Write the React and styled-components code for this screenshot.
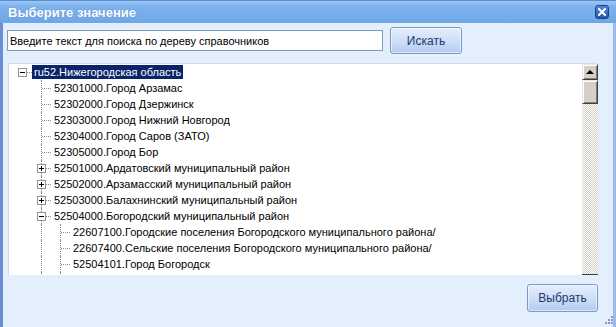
import React from 'react'
import styled, { createGlobalStyle, css } from 'styled-components'

const Global = createGlobalStyle`
html, body {
  margin: 0;
  padding: 0;
  background: #e3effd;
}
* { box-sizing: border-box; }
`;

const Window = styled.div`
width: 616px;
height: 327px;
display: flex;
flex-direction: column;
position: relative;
overflow: hidden;
font-family: "Liberation Sans", Arial, sans-serif;
`;

const TitleBar = styled.div`
height: 23px;
flex: none;
display: flex;
align-items: center;
justify-content: space-between;
padding: 0 7px 0 8px;
border-top: 1px solid #5a8ad6;
background: linear-gradient(to bottom, #9cc6f4 0%, #7db2ec 25%, #6fa6e6 100%);
`;

const Title = styled.div`
color: #fff;
font-weight: bold;
font-size: 13px;
text-shadow: 0 0 1px #4f7fc4;
`;

const CloseButton = styled.div`
width: 14px;
height: 14px;
border-radius: 3px;
border: 1px solid #1d3f8a;
background: linear-gradient(to bottom, #4f86dc, #2556b4);
display: flex;
align-items: center;
justify-content: center;
`;

const Body = styled.div`
flex: 1;
display: flex;
flex-direction: column;
border-left: 3px solid #6b8fd2;
border-right: 3px solid #9cbbea;
padding: 4px 15px 14px 4px;
background: #e3effd;
`;

const SearchRow = styled.div`
height: 27px;
display: flex;
align-items: center;
gap: 7px;
`;

const SearchInput = styled.input`
width: 376px;
height: 21px;
border: 1px solid #7f9db9;
background: #fff;
padding: 0 2px;
font-family: "Liberation Sans", Arial, sans-serif;
font-size: 11px;
color: #000;
outline: none;
`;

const Button = styled.button`
height: ${p => p.$h || 27}px;
width: ${p => p.$w}px;
border: 1px solid #7c98c6;
border-radius: 3px;
background: linear-gradient(to bottom, #e4eefc 0%, #cfdff7 50%, #b3cbef 100%);
box-shadow: inset 0 0 0 1px rgba(255,255,255,0.55);
color: #1d3a6e;
font-family: "Liberation Sans", Arial, sans-serif;
font-size: 12px;
padding: 0;
`;

const Panel = styled.div`
margin-top: 9px;
margin-left: 1px;
height: 212px;
display: flex;
background: #fff;
border-top: 1px solid #d3dde9;
border-left: 1px solid #d3dde9;
overflow: hidden;
`;

const Tree = styled.div`
flex: 1;
padding: 0 0 0 4px;
overflow: hidden;
`;

const Row = styled.div`
height: 16px;
display: flex;
align-items: center;
white-space: nowrap;
`;

const Guide = styled.div`
width: 19px;
height: 16px;
flex: none;
position: relative;
${p => p.$v && css`
  &::before {
    content: '';
    position: absolute;
    left: 9px;
    top: 0;
    height: ${p.$v === 'half' ? '9px' : '16px'};
    border-left: 1px dotted #8a8a8a;
  }
`}
${p => p.$h && css`
  &::after {
    content: '';
    position: absolute;
    left: 10px;
    right: 0;
    top: 8px;
    border-top: 1px dotted #8a8a8a;
  }
`}
`;

const Toggle = styled.div`
position: absolute;
left: 5px;
top: 4px;
width: 9px;
height: 9px;
border: 1px solid #939393;
background: #fff;
z-index: 1;
&::before {
  content: '';
  position: absolute;
  left: 1px;
  top: 3px;
  width: 5px;
  height: 1px;
  background: #000;
}
${p => p.$plus && css`
  &::after {
    content: '';
    position: absolute;
    left: 3px;
    top: 1px;
    width: 1px;
    height: 5px;
    background: #000;
  }
`}
`;

const Label = styled.span`
height: 14px;
line-height: 14px;
padding: 0 2px;
margin-left: ${p => (p.$root ? 0 : 1)}px;
font-size: 11px;
color: ${p => p.$color || '#000'};
${p => p.$selected && css`
  background: #0a246a;
  color: #fff;
`}
`;

const ScrollBar = styled.div`
width: 16px;
flex: none;
display: flex;
flex-direction: column;
margin-top: 0;
`;

const bevel = css`
background: #d4d0c8;
border-top: 1px solid #e8e6e1;
border-left: 1px solid #e8e6e1;
border-right: 1px solid #404040;
border-bottom: 1px solid #404040;
box-shadow: inset 1px 1px 0 #fff, inset -1px -1px 0 #808080;
`;

const ScrollArrow = styled.div`
${bevel}
height: 16px;
display: flex;
align-items: center;
justify-content: center;
&::after {
  content: '';
  border-left: 4px solid transparent;
  border-right: 4px solid transparent;
  border-bottom: 4px solid #000;
}
`;

const Thumb = styled.div`
${bevel}
height: 24px;
`;

const Track = styled.div`
flex: 1;
background: repeating-conic-gradient(#d4d0c8 0 25%, #fff 0 50%) 0 0 / 2px 2px;
border-bottom: 1px solid #404040;
`;

const Footer = styled.div`
margin-top: 9px;
display: flex;
justify-content: flex-end;
`;

const Grip = styled.svg`
position: absolute;
right: 2px;
bottom: 2px;
`;

const rows = [
  { level: 0, text: 'ru52.Нижегородская область', toggle: 'minus', selected: true },
  { level: 1, text: '52301000.Город Арзамас' },
  { level: 1, text: '52302000.Город Дзержинск' },
  { level: 1, text: '52303000.Город Нижний Новгород' },
  { level: 1, text: '52304000.Город Саров (ЗАТО)' },
  { level: 1, text: '52305000.Город Бор' },
  { level: 1, text: '52501000.Ардатовский муниципальный район', toggle: 'plus' },
  { level: 1, text: '52502000.Арзамасский муниципальный район', toggle: 'plus' },
  { level: 1, text: '52503000.Балахнинский муниципальный район', toggle: 'plus' },
  { level: 1, text: '52504000.Богородский муниципальный район', toggle: 'minus' },
  { level: 2, text: '22607100.Городские поселения Богородского муниципального района/' },
  { level: 2, text: '22607400.Сельские поселения Богородского муниципального района/' },
  { level: 2, text: '52504101.Город Богородск' },
  { level: 2, text: '52504102.Богородский сельсовет района', color: '#e2b866' },
];

const TreeRow = ({ row }) => {
  const cells = []
  for (let i = 0; i < row.level; i++) {
    // root has no siblings, deeper levels all continue below
    cells.push(<Guide key={i} $v={i > 0 ? 'full' : null} />)
  }
  return (
    <Row>
      {cells}
      <Guide $v={row.level > 0 ? 'full' : null} $h>
        {row.toggle && <Toggle $plus={row.toggle === 'plus'} />}
      </Guide>
      <Label $root={row.level === 0} $selected={row.selected} $color={row.color}>
        {row.text}
      </Label>
    </Row>
  )
}

const App = () => {
  return (
    <Window>
      <Global />
      <TitleBar>
        <Title>Выберите значение</Title>
        <CloseButton>
          <svg width="8" height="8" viewBox="0 0 8 8">
            <path d="M1 1L7 7M7 1L1 7" stroke="#fff" strokeWidth="2" strokeLinecap="square" />
          </svg>
        </CloseButton>
      </TitleBar>
      <Body>
        <SearchRow>
          <SearchInput defaultValue="Введите текст для поиска по дереву справочников" />
          <Button $w={72}>Искать</Button>
        </SearchRow>
        <Panel>
          <Tree>
            {rows.map((row, i) => <TreeRow key={i} row={row} />)}
          </Tree>
          <ScrollBar>
            <ScrollArrow />
            <Thumb />
            <Track />
          </ScrollBar>
        </Panel>
        <Footer>
          <Button $w={71} $h={28}>Выбрать</Button>
        </Footer>
      </Body>
      <Grip width="10" height="10" viewBox="0 0 10 10">
        <rect x="7" y="1" width="2" height="2" fill="#7a9ad0" />
        <rect x="4" y="4" width="2" height="2" fill="#7a9ad0" />
        <rect x="7" y="4" width="2" height="2" fill="#7a9ad0" />
        <rect x="1" y="7" width="2" height="2" fill="#7a9ad0" />
        <rect x="4" y="7" width="2" height="2" fill="#7a9ad0" />
        <rect x="7" y="7" width="2" height="2" fill="#7a9ad0" />
      </Grip>
    </Window>
  )
}

export default App
